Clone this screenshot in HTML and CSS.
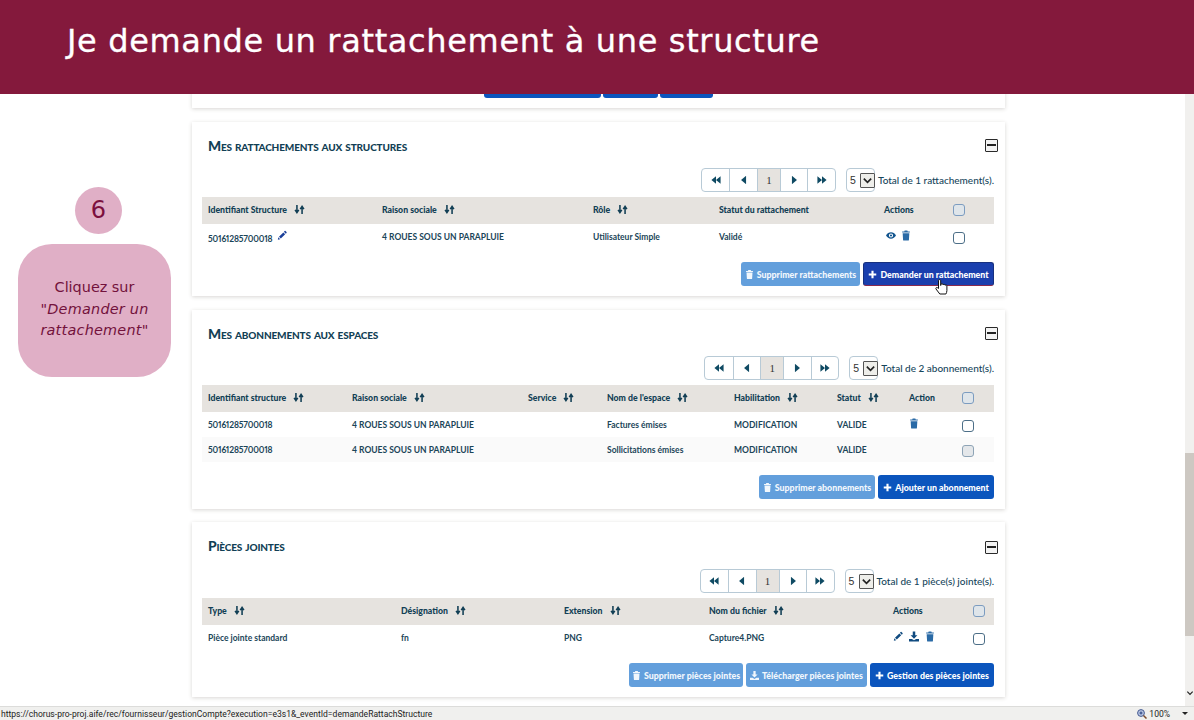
FILE: index.html
```html
<!DOCTYPE html>
<html lang="fr">
<head>
<meta charset="utf-8">
<title>Je demande un rattachement à une structure</title>
<link rel="stylesheet" href="styles.css">
</head>
<body>
<svg class="defs" width="0" height="0" aria-hidden="true">
  <symbol id="i-sort" viewBox="0 0 12 12"><path d="M3.2 1v7.4M1.200 6.400l2 3 2-3M8.800 11V3.600M6.800 5.600l2-3 2 3" fill="none" stroke="currentColor" stroke-width="1.700"/></symbol>
  <symbol id="i-pen" viewBox="0 0 12 12"><path d="M1 11l.6-2.800 2.200 2.200zM2.400 7.500l5.200-5.200 2.200 2.200-5.200 5.200zM8.300 1.600l.9-.9a.7.7 0 0 1 1 0l1.200 1.200a.7.7 0 0 1 0 1l-.9.9z" fill="currentColor"/></symbol>
  <symbol id="i-trash" viewBox="0 0 12 12"><path d="M4.400 0h3.200l.5 1.200h2.500v1.300H1.400V1.200h2.500zM2 3.300h8l-.5 8a.8.8 0 0 1-.8.7H3.300a.8.8 0 0 1-.8-.7z" fill="currentColor"/></symbol>
  <symbol id="i-eye" viewBox="0 0 12 12"><path fill-rule="evenodd" d="M0 6c1.400-2.500 3.500-3.800 6-3.800s4.600 1.300 6 3.800c-1.400 2.500-3.500 3.800-6 3.800S1.400 8.500 0 6zm6-2.500a2.500 2.500 0 1 0 0 5 2.500 2.500 0 0 0 0-5zm0 1.200a1.300 1.300 0 1 1 0 2.600 1.300 1.300 0 0 1 0-2.600z" fill="currentColor"/></symbol>
  <symbol id="i-down" viewBox="0 0 12 12"><path d="M4.500 0h3v4.500h2.600L6 8.600 1.900 4.500h2.600zM0 9h3.500L6 10.500 8.500 9H12v3H0z" fill="currentColor"/></symbol>
  <symbol id="i-plus" viewBox="0 0 12 12"><path d="M4.600 1h2.800v3.600H11v2.800H7.400V11H4.600V7.400H1V4.600h3.600z" fill="currentColor"/></symbol>
  <symbol id="i-first" viewBox="0 0 12 12"><path d="M6 1.500v9L.5 6zM11.500 1.500v9L6 6z" fill="currentColor"/></symbol>
  <symbol id="i-prev" viewBox="0 0 12 12"><path d="M8.500 1v10L2.500 6z" fill="currentColor"/></symbol>
  <symbol id="i-next" viewBox="0 0 12 12"><path d="M3.500 1v10l6-5z" fill="currentColor"/></symbol>
  <symbol id="i-last" viewBox="0 0 12 12"><path d="M.5 1.500v9L6 6zM6 1.500v9L11.500 6z" fill="currentColor"/></symbol>
  <symbol id="i-chev" viewBox="0 0 12 12"><path d="M2 4l4 4 4-4" fill="none" stroke="currentColor" stroke-width="1.800"/></symbol>
</svg>

<div class="page">
  <header class="banner">Je demande un rattachement à une structure</header>

  <div class="content">
    <aside class="guide">
      <div class="step-number">6</div>
      <div class="bubble">
        <span>Cliquez sur</span>
        <em>"Demander un rattachement"</em>
      </div>
    </aside>

    <main class="cards">
      <section class="card card-top">
        <div class="actions actions-top">
          <span class="btn btn-primary btn-a"></span>
          <span class="btn btn-primary btn-b"></span>
          <span class="btn btn-primary btn-c"></span>
        </div>
      </section>

      <section class="card card-one">
        <div class="card-head">
          <h2>Mes rattachements aux structures</h2>
          <span class="collapse"></span>
        </div>
        <div class="toolbar">
          <div class="pager">
            <span class="pg"><svg class="ic-s"><use href="#i-first"/></svg></span>
            <span class="pg"><svg class="ic-s"><use href="#i-prev"/></svg></span>
            <span class="pg pg-cur">1</span>
            <span class="pg"><svg class="ic-s"><use href="#i-next"/></svg></span>
            <span class="pg"><svg class="ic-s"><use href="#i-last"/></svg></span>
          </div>
          <div class="select">5<span class="select-arrow"><svg class="ic-c"><use href="#i-chev"/></svg></span></div>
          <span class="total">Total de 1 rattachement(s).</span>
        </div>
        <table class="grid grid-one">
          <colgroup><col class="c1"><col class="c2"><col class="c3"><col class="c4"><col class="c5"><col class="c6"></colgroup>
          <thead><tr>
            <th>Identifiant Structure <svg class="sort"><use href="#i-sort"/></svg></th>
            <th>Raison sociale <svg class="sort"><use href="#i-sort"/></svg></th>
            <th>Rôle <svg class="sort"><use href="#i-sort"/></svg></th>
            <th>Statut du rattachement</th>
            <th>Actions</th>
            <th><span class="check"></span></th>
          </tr></thead>
          <tbody><tr>
            <td><span class="num">50161285700018</span> <svg class="ic ic-navy"><use href="#i-pen"/></svg></td>
            <td>4 ROUES SOUS UN PARAPLUIE</td>
            <td>Utilisateur Simple</td>
            <td>Validé</td>
            <td><svg class="ic ic-eye"><use href="#i-eye"/></svg><svg class="ic"><use href="#i-trash"/></svg></td>
            <td><span class="check check-row"></span></td>
          </tr></tbody>
        </table>
        <div class="actions">
          <span class="btn btn-off btn-w119"><svg class="ic-b"><use href="#i-trash"/></svg>Supprimer rattachements</span>
          <span class="btn btn-active btn-w131"><svg class="ic-b"><use href="#i-plus"/></svg>Demander un rattachement</span>
          <svg class="cursor" viewBox="0 0 14 18" aria-hidden="true"><path d="M4.500 10V2.200a1.100 1.100 0 0 1 2.200 0V7l.3-1a1 1 0 0 1 2 .2l.2.3a1 1 0 0 1 1.900.3 1 1 0 0 1 1.800.6v4.600c0 1.500-.5 2.500-1 3.500H5.800L2 10.500c-.6-1 .6-2 1.500-1.300z" fill="#fff" stroke="#111" stroke-width="1"/></svg>
        </div>
      </section>

      <section class="card card-two">
        <div class="card-head">
          <h2>Mes abonnements aux espaces</h2>
          <span class="collapse"></span>
        </div>
        <div class="toolbar">
          <div class="pager">
            <span class="pg"><svg class="ic-s"><use href="#i-first"/></svg></span>
            <span class="pg"><svg class="ic-s"><use href="#i-prev"/></svg></span>
            <span class="pg pg-cur">1</span>
            <span class="pg"><svg class="ic-s"><use href="#i-next"/></svg></span>
            <span class="pg"><svg class="ic-s"><use href="#i-last"/></svg></span>
          </div>
          <div class="select">5<span class="select-arrow"><svg class="ic-c"><use href="#i-chev"/></svg></span></div>
          <span class="total">Total de 2 abonnement(s).</span>
        </div>
        <table class="grid grid-two">
          <colgroup><col class="c1"><col class="c2"><col class="c3"><col class="c4"><col class="c5"><col class="c6"><col class="c7"><col class="c8"></colgroup>
          <thead><tr>
            <th>Identifiant structure <svg class="sort"><use href="#i-sort"/></svg></th>
            <th>Raison sociale <svg class="sort"><use href="#i-sort"/></svg></th>
            <th>Service <svg class="sort"><use href="#i-sort"/></svg></th>
            <th>Nom de l'espace <svg class="sort"><use href="#i-sort"/></svg></th>
            <th>Habilitation <svg class="sort"><use href="#i-sort"/></svg></th>
            <th>Statut <svg class="sort"><use href="#i-sort"/></svg></th>
            <th>Action</th>
            <th><span class="check"></span></th>
          </tr></thead>
          <tbody>
            <tr>
              <td><span class="num">50161285700018</span></td><td>4 ROUES SOUS UN PARAPLUIE</td><td></td><td>Factures émises</td><td>MODIFICATION</td><td>VALIDE</td>
              <td><svg class="ic"><use href="#i-trash"/></svg></td><td><span class="check check-row"></span></td>
            </tr>
            <tr class="alt">
              <td><span class="num">50161285700018</span></td><td>4 ROUES SOUS UN PARAPLUIE</td><td></td><td>Sollicitations émises</td><td>MODIFICATION</td><td>VALIDE</td>
              <td></td><td><span class="check check-row check-dim"></span></td>
            </tr>
          </tbody>
        </table>
        <div class="actions">
          <span class="btn btn-off btn-w116"><svg class="ic-b"><use href="#i-trash"/></svg>Supprimer abonnements</span>
          <span class="btn btn-primary btn-w116"><svg class="ic-b"><use href="#i-plus"/></svg>Ajouter un abonnement</span>
        </div>
      </section>

      <section class="card card-three">
        <div class="card-head">
          <h2>Pièces jointes</h2>
          <span class="collapse"></span>
        </div>
        <div class="toolbar">
          <div class="pager">
            <span class="pg"><svg class="ic-s"><use href="#i-first"/></svg></span>
            <span class="pg"><svg class="ic-s"><use href="#i-prev"/></svg></span>
            <span class="pg pg-cur">1</span>
            <span class="pg"><svg class="ic-s"><use href="#i-next"/></svg></span>
            <span class="pg"><svg class="ic-s"><use href="#i-last"/></svg></span>
          </div>
          <div class="select">5<span class="select-arrow"><svg class="ic-c"><use href="#i-chev"/></svg></span></div>
          <span class="total">Total de 1 pièce(s) jointe(s).</span>
        </div>
        <table class="grid grid-three">
          <colgroup><col class="c1"><col class="c2"><col class="c3"><col class="c4"><col class="c5"><col class="c6"></colgroup>
          <thead><tr>
            <th>Type <svg class="sort"><use href="#i-sort"/></svg></th>
            <th>Désignation <svg class="sort"><use href="#i-sort"/></svg></th>
            <th>Extension <svg class="sort"><use href="#i-sort"/></svg></th>
            <th>Nom du fichier <svg class="sort"><use href="#i-sort"/></svg></th>
            <th>Actions</th>
            <th><span class="check"></span></th>
          </tr></thead>
          <tbody><tr>
            <td>Pièce jointe standard</td>
            <td>fn</td>
            <td>PNG</td>
            <td>Capture4.PNG</td>
            <td><svg class="ic ic-tools"><use href="#i-pen"/></svg><svg class="ic ic-tools"><use href="#i-down"/></svg><svg class="ic"><use href="#i-trash"/></svg></td>
            <td><span class="check check-row"></span></td>
          </tr></tbody>
        </table>
        <div class="actions">
          <span class="btn btn-off btn-w114"><svg class="ic-b"><use href="#i-trash"/></svg>Supprimer pièces jointes</span>
          <span class="btn btn-off btn-w121"><svg class="ic-b"><use href="#i-down"/></svg>Télécharger pièces jointes</span>
          <span class="btn btn-primary btn-w124"><svg class="ic-b"><use href="#i-plus"/></svg>Gestion des pièces jointes</span>
        </div>
      </section>
    </main>

    <div class="spacer"></div>

    <div class="scrollbar">
      <div class="scroll-thumb"></div>
      <svg class="scroll-arrow"><use href="#i-chev"/></svg>
    </div>
  </div>

  <footer class="status">
    <span class="status-url">https://chorus-pro-proj.aife/rec/fournisseur/gestionCompte?execution=e3s1&amp;_eventId=demandeRattachStructure</span>
    <span class="status-zoom">
      <svg class="zoom-ic" viewBox="0 0 10 10" aria-hidden="true"><circle cx="4" cy="4" r="3.400" fill="#b9c6e4" stroke="#44598f"/><path d="M2.500 4h3M4 2.500v3" stroke="#27407f"/><path d="M6.500 6.500L9.500 9.500" stroke="#7b4a2a" stroke-width="1.500"/></svg>100%
      <i class="zoom-caret"></i>
    </span>
  </footer>
</div>
</body>
</html>
```
FILE: styles.css
```css
* { box-sizing: border-box; }
html, body { margin: 0; padding: 0; height: 100%; }
body { font-family: Lato, "Liberation Sans", sans-serif; color: #123f55; background: #fff; overflow: hidden; }
.defs { position: absolute; }

.page { position: relative; display: flex; flex-direction: column; width: 1194px; height: 720px; overflow: hidden; }

.banner {
  position: absolute; left: 0; top: 0; right: 0; height: 94px; z-index: 5;
  padding: 21px 0 0 67px;
  background: #84193c; color: #fff;
  font: 32px/40px "DejaVu Sans", Verdana, sans-serif; letter-spacing: .65px;
  -webkit-text-stroke: .3px #fff;
}

.content { flex: 1; display: flex; min-height: 0; }

.guide { width: 192px; flex: none; display: flex; flex-direction: column; padding: 187px 0 0 18px; }
.step-number {
  width: 47px; height: 47px; margin: 0 0 10px 57px; padding-bottom: 2px; border-radius: 50%;
  display: flex; align-items: center; justify-content: center;
  background: #e0afc6; color: #7c0f3e; font: 24px "DejaVu Sans", sans-serif;
}
.bubble {
  width: 153px; height: 133px; padding: 0 8px 2px; border-radius: 34px;
  display: flex; flex-direction: column; align-items: center; justify-content: center; text-align: center;
  background: #e0afc6; color: #73123c; font: 14.400px/21.500px "DejaVu Sans", sans-serif;
}
.bubble em { font-style: italic; letter-spacing: .25px; }

.cards { width: 813px; flex: none; display: flex; flex-direction: column; gap: 14px; }
.card { background: #fff; box-shadow: 0 1px 4px rgba(60, 50, 40, .2); padding: 0 11px 0 10px; display: flex; flex-direction: column; }
.card-top { height: 108px; justify-content: flex-end; padding-bottom: 10px; }
.card-one { height: 174px; }
.card-two { height: 199px; margin-bottom: -1px; }
.card-three { height: 175px; }

.card-head { height: 46px; flex: none; display: flex; align-items: center; justify-content: space-between; padding: 0 0 0 6px; }
.card-three .card-head { height: 47px; }
.card-head h2 { margin: 0; font-size: 13.800px; letter-spacing: -.16px; font-weight: 900; font-variant: small-caps; color: #123f55; }
.collapse { position: relative; width: 13px; height: 13px; margin: 1px -4px 0 0; border: 1.500px solid #2a2a2a; border-radius: 1px; background: #f3f3f3; }
.card-three .collapse { margin-top: 3px; }
.collapse::after { content: ""; position: absolute; left: 1px; right: 1px; top: 4px; height: 2px; background: #222; }

.toolbar { height: 24px; flex: none; display: flex; justify-content: flex-end; align-items: center; }
.pager { display: flex; height: 24px; border: 1px solid #b8cad6; border-radius: 4px; overflow: hidden; background: #fff; }
.pg { width: 27.500px; display: flex; align-items: center; justify-content: center; border-left: 1px solid #b8cad6; color: #0f4a63; }
.pg:first-child { border-left: 0; }
.pg-cur { width: 23px; background: #e6e3df; font: 11px "Liberation Serif", serif; color: #333; }
.ic-s { width: 10px; height: 10px; }
.select { position: relative; width: 29px; height: 24px; margin: 0 3px 0 10px; padding-left: 3px; border: 1px solid #b8cad6; border-radius: 4px; display: flex; align-items: center; font: 10.500px "Liberation Sans", sans-serif; color: #333; }
.select-arrow { position: absolute; right: -1px; top: 4px; width: 15px; height: 15px; display: flex; align-items: center; justify-content: center; background: #eeeeea; border: 1px solid #555; border-radius: 1px; color: #222; }
.ic-c { width: 11px; height: 11px; }
.total { font-size: 10px; font-weight: 500; color: #16465b; white-space: nowrap; }

.grid { width: 792px; margin-top: 5px; table-layout: fixed; border-collapse: collapse; font-size: 8.500px; }
.grid th { height: 27px; padding: 0 0 2px 6px; background: #e6e3df; text-align: left; font-size: 8.700px; font-weight: 900; color: #123f55; white-space: nowrap; }
.grid td { height: 25px; padding: 0 0 0 6px; font-weight: 700; color: #1a4558; white-space: nowrap; }
.grid .alt td { background: #fafafa; }
.num { letter-spacing: -.15px; font-variant-numeric: proportional-nums; }
.grid-one .c1 { width: 174px; } .grid-one .c2 { width: 211px; } .grid-one .c3 { width: 126px; }
.grid-one .c4 { width: 165px; } .grid-one .c5 { width: 69px; } .grid-one .c6 { width: 47px; }
.grid-two .c1 { width: 144px; } .grid-two .c2 { width: 176px; } .grid-two .c3 { width: 79px; } .grid-two .c4 { width: 127px; }
.grid-two .c5 { width: 103px; } .grid-two .c6 { width: 72px; } .grid-two .c7 { width: 53px; } .grid-two .c8 { width: 38px; }
.grid-three .c1 { width: 193px; } .grid-three .c2 { width: 163px; } .grid-three .c3 { width: 145px; }
.grid-three .c4 { width: 184px; } .grid-three .c5 { width: 80px; } .grid-three .c6 { width: 27px; }

.sort { width: 11px; height: 11px; margin-left: 5px; vertical-align: -2px; color: #123f55; }
.ic { width: 10px; height: 11px; vertical-align: 1px; color: #2a6aa6; }
.ic-navy { color: #1a3f9a; margin-left: 2px; }
.ic-eye { margin: 0 5px 0 2px; color: #14568f; }
.ic-tools { margin-right: 6px; color: #0f4a7f; }
.check { display: inline-block; width: 12px; height: 12px; border: 1px solid #7c9cc0; border-radius: 3px; background: #dfe5ea; vertical-align: middle; }
.check-row { background: #fff; border-color: #4d6f88; margin-top: 2px; }
.check-dim { background: #e4e7ea; border-color: #8ea4b6; }

.actions { position: relative; display: flex; justify-content: flex-end; gap: 3px; margin-top: 13px; }
.actions-top { margin-top: 0; padding-right: 281px; gap: 2px; }
.btn { height: 24px; display: inline-flex; align-items: center; justify-content: center; gap: 3px; border-radius: 3px; color: #fff; font-size: 8.800px; font-weight: 900; white-space: nowrap; }
.btn-primary { background: #0b55bd; }
.btn-active { background: #1a3fae; border: 1px solid #17307f; border-bottom-color: #8a2a4c; }
.btn-off { background: #639fdc; color: #f2f7fc; }
.btn-a { width: 117px; } .btn-b { width: 55px; } .btn-c { width: 53px; }
.btn-w114 { width: 114px; } .btn-w116 { width: 116px; } .btn-w119 { width: 119px; }
.btn-w121 { width: 121px; } .btn-w124 { width: 124px; } .btn-w131 { width: 131px; }
.ic-b { width: 9px; height: 9px; flex: none; }
.cursor { position: absolute; left: 732px; top: 16px; width: 14px; height: 19px; }

.spacer { flex: 1; }
.scrollbar { width: 9px; flex: none; position: relative; background: #f1f0ee; padding-top: 453px; }
.scroll-thumb { height: 183px; background: #cdc8c2; }
.scroll-arrow { position: absolute; left: 1px; bottom: 9px; width: 8px; height: 8px; color: #222; }

.status { height: 14px; flex: none; display: flex; justify-content: space-between; align-items: center; padding: 0 6px 0 1px; background: #f0f0ee; border-top: 1px solid #dcdcda; font: 8.560px Roboto, sans-serif; color: #222; }
.status-zoom { display: flex; align-items: center; gap: 2px; }
.zoom-ic { width: 10px; height: 10px; }
.zoom-caret { width: 0; height: 0; margin-left: 10px; border: 3px solid transparent; border-top: 3px solid #222; border-bottom: 0; }
```
